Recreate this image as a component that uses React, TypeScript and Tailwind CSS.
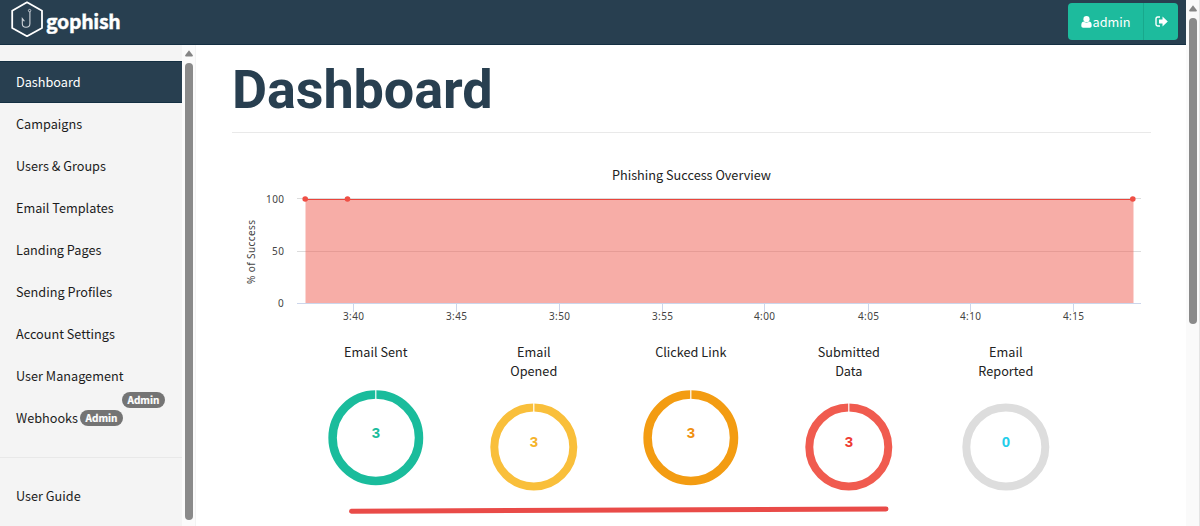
const NAV_ITEMS = [
  'Dashboard',
  'Campaigns',
  'Users & Groups',
  'Email Templates',
  'Landing Pages',
  'Sending Profiles',
  'Account Settings',
];

const TICKS = [
  { x: 121.5, label: '3:40' },
  { x: 224.5, label: '3:45' },
  { x: 327.5, label: '3:50' },
  { x: 430.5, label: '3:55' },
  { x: 532.5, label: '4:00' },
  { x: 636.5, label: '4:05' },
  { x: 738.5, label: '4:10' },
  { x: 841.5, label: '4:15' },
];

interface Stat {
  title: string[];
  value: number;
  color: string;
  textColor: string;
}

const STATS: Stat[] = [
  { title: ['Email Sent'], value: 3, color: '#1abc9c', textColor: '#1abc9c' },
  { title: ['Email', 'Opened'], value: 3, color: '#f9bf3b', textColor: '#f5b32b' },
  { title: ['Clicked Link'], value: 3, color: '#f39c12', textColor: '#f0900f' },
  { title: ['Submitted', 'Data'], value: 3, color: '#f05b4f', textColor: '#ee3b33' },
  { title: ['Email', 'Reported'], value: 0, color: '#dddddd', textColor: '#22cdea' },
];

function Logo() {
  return (
    <svg className="w-8 h-9 shrink-0" viewBox="0 0 32 36" fill="none" stroke="#fff">
      <path strokeWidth={1.8} strokeLinejoin="round" d="M16 1.3L31 9.7V27L16 35.2L1.2 27V9.7Z" />
      <circle cx="18.6" cy="9.6" r="1.2" strokeWidth={0.9} stroke="#cfd5da" />
      <path strokeWidth={1.1} stroke="#cfd5da" strokeLinecap="round" d="M18.9 11V22.4C18.9 24.6 17.2 26.2 15 26.2S11.3 24.6 11.3 22.4V17.6L13.1 19.8" />
    </svg>
  );
}

function Badge() {
  return (
    <span className="block h-4 w-[43px] rounded-full bg-[#747474] text-center text-[10px] leading-[15px] font-bold text-white [-webkit-text-stroke:0.2px_#fff]">
      Admin
    </span>
  );
}

function ScrollUp() {
  return (
    <svg className="w-2 h-[7px] shrink-0" viewBox="0 0 8 7">
      <path d="M4 0.3L7.8 5.2Q8 6.5 7 6.5H1Q0 6.5 0.2 5.2Z" fill="#858585" />
    </svg>
  );
}

function Header() {
  return (
    <header className="flex h-[45px] shrink-0 items-start justify-between border-b border-[#142f42] bg-[#283f50]">
      <div className="flex pt-[1px] pl-[11px]">
        <Logo />
        <span className="ml-[3px] mt-[5px] text-[19.5px] leading-[30px] font-bold tracking-[-0.3px] text-white [-webkit-text-stroke:0.4px_#fff]">
          gophish
        </span>
      </div>
      <div className="mt-[3px] mr-2 flex h-[37px] overflow-hidden rounded-[4px] bg-[#1dbb9d] text-white">
        <div className="flex w-[76px] items-center justify-center gap-[1px] border-r border-[#18a88c]">
          <svg className="h-3 w-[11px]" viewBox="0 0 11 12" fill="currentColor">
            <circle cx="5.5" cy="3.2" r="3.1" />
            <path d="M2.5 5.5C.9 5.8.3 7.3.3 9.6C.3 11 1 11.8 2.2 11.8H8.8C10 11.8 10.7 11 10.7 9.6C10.7 7.3 10.1 5.8 8.5 5.5C7 7 4 7 2.5 5.5Z" />
          </svg>
          <span className="text-[12.7px] leading-5">admin</span>
        </div>
        <div className="flex w-[34px] items-center justify-center">
          <svg className="h-[11px] w-[13px]" viewBox="0 0 13 11" fill="none">
            <path d="M5 1H2.7Q1 1 1 2.7V8.3Q1 10 2.7 10H5" stroke="currentColor" strokeWidth={1.4} />
            <path d="M4 3.5H7.5V.6L12.8 5.5L7.5 10.4V7.5H4Z" fill="currentColor" />
          </svg>
        </div>
      </div>
    </header>
  );
}

function Sidebar() {
  return (
    <aside className="flex w-[196px] shrink-0 border-r border-[#f3f3f3]">
      <nav className="flex w-[182px] flex-col bg-[#f4f4f4] pt-4 text-[12.7px] leading-5 text-[#1c1c1c]">
        {NAV_ITEMS.map((item, i) => (
          <div
            key={item}
            className={
              i === 0
                ? 'flex h-[42px] items-center border-y border-[#142f42] bg-[#283f50] pl-4 text-white'
                : 'flex h-[42px] items-center pl-4'
            }
          >
            {item}
          </div>
        ))}
        <div className="relative flex h-[42px] items-center pl-4">
          User Management
          <div className="absolute top-[37px] left-[122px]">
            <Badge />
          </div>
        </div>
        <div className="flex h-[42px] items-center gap-[2px] pl-4">
          Webhooks
          <Badge />
        </div>
        <div className="mt-[18px] border-t border-[#e8e8e8]" />
        <div className="mt-[17px] flex h-[42px] items-center pl-4">User Guide</div>
      </nav>
      <div className="flex flex-1 flex-col items-center bg-[#fbfbfb] pt-[5px]">
        <ScrollUp />
        <div className="mt-[6px] h-[457px] w-2 rounded-full bg-[#8a8a8a]" />
      </div>
    </aside>
  );
}

function OverviewChart() {
  return (
    <svg className="block h-[176px] w-[919px] font-['Noto_Sans',sans-serif]" viewBox="0 0 919 176">
      <text x="459.5" y="27" textAnchor="middle" fontSize="12.7" fill="#222" className="font-['Noto_Sans_CJK_SC',sans-serif]">
        Phishing Success Overview
      </text>
      <path d="M65 45.5H909M65 98.5H909" stroke="#dcdcdc" />
      <rect x="73.5" y="46" width="828" height="104" fill="#f05b4f" fillOpacity="0.5" />
      <path d="M73.5 46.5H901" stroke="#e9453c" />
      <path d="M65 150.5H909" stroke="#ccd6eb" />
      {[73.2, 115.5, 900.8].map((x) => (
        <circle key={x} cx={x} cy="46" r="2.8" fill="#ef4f45" />
      ))}
      {TICKS.map(({ x, label }) => (
        <g key={label}>
          <path d={`M${x} 151V159`} stroke="#ccd6eb" />
          <text x={x - 10.5} y="167" textLength="21" fontSize="10" fill="#444">{label}</text>
        </g>
      ))}
      <g fontSize="10" fill="#444">
        <text x="34" y="49.5" textLength="18">100</text>
        <text x="40" y="101.5" textLength="12">50</text>
        <text x="46" y="154">0</text>
        <text transform="translate(23 131) rotate(-90)" textLength="64">% of Success</text>
      </g>
    </svg>
  );
}

function Donut({ stat }: { stat: Stat }) {
  // Two-line titles leave less room, so the ring is smaller and sits lower
  const small = stat.title.length > 1;
  const cy = small ? 117 : 107.7;
  const r = small ? 39.5 : 43.2;
  return (
    <svg className="block h-[180px] w-full" viewBox="0 0 157.6 180" textAnchor="middle">
      {stat.title.map((line, i) => (
        <text key={line} x="78.8" y={27 + i * 19} fontSize="12.7" fill="#222">{line}</text>
      ))}
      <circle cx="78.8" cy={cy} r={r} fill="none" stroke={stat.color} strokeWidth={small ? 8 : 8.5} />
      {stat.value > 0 && <path d={`M78.8 ${cy - r - 5}V${cy - r + 5}`} stroke="#fff" strokeWidth={1.2} />}
      <text x="78.8" y={cy + 0.3} fontSize="15" fill={stat.textColor} className="font-['Liberation_Sans',sans-serif] font-bold">
        {stat.value}
      </text>
    </svg>
  );
}

export default function App() {
  return (
    <div className="flex h-[526px] w-[1200px] overflow-hidden bg-white font-['Noto_Sans_CJK_SC',sans-serif]">
      <div className="flex w-[1186px] flex-col">
        <Header />
        <div className="flex min-h-0 flex-1">
          <Sidebar />
          <main className="min-w-0 flex-1 pl-9">
            <div className="w-[919px]">
              <h1 className="h-[88px] border-b border-[#e9e9e9] pt-[13px] font-[Roboto] text-[54px] leading-[64px] font-bold tracking-[-0.1px] text-[#283f50]">
                Dashboard
              </h1>
              <div className="pt-5">
                <OverviewChart />
              </div>
              <div className="ml-[65px] mt-[1px] grid w-[788px] grid-cols-5">
                {STATS.map((stat) => (
                  <Donut key={stat.title.join(' ')} stat={stat} />
                ))}
              </div>
              {/* Hand-drawn underline below the first four rings */}
              <svg className="-mt-[6px] ml-[116px] block h-3 w-[544px]" viewBox="0 0 544 12">
                <path d="M3.5 7.2L538 5" stroke="#e94b48" strokeWidth={5} strokeLinecap="round" />
              </svg>
            </div>
          </main>
        </div>
      </div>
      <div className="flex w-[14px] flex-col items-center border-r border-[#e4e4e4] bg-[#fafafa] pt-[5px]">
        <ScrollUp />
        <div className="mt-[6px] h-[306px] w-2 rounded-full bg-[#8a8a8a]" />
      </div>
    </div>
  );
}
